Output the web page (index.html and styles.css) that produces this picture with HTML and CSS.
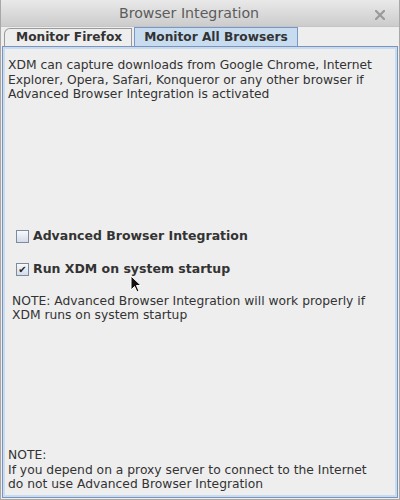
FILE: index.html
```html
<!DOCTYPE html>
<html lang="en">
<head>
  <meta charset="UTF-8" />
  <title>Browser Integration</title>
  <link rel="stylesheet" href="styles.css">
</head>
<body>

  <div class="window">
    <!-- Title bar -->
    <div class="titlebar">
      <span class="title">Browser Integration</span>
      <span class="close">
        <svg width="10" height="10" viewBox="0 0 10 10">
          <path d="M1 1 L9 9 M9 1 L1 9" stroke="#9a9a9a" stroke-width="2.2" stroke-linecap="square"/>
        </svg>
      </span>
    </div>

    <!-- Tabs -->
    <div class="tabs">
      <div class="tab">Monitor Firefox</div>
      <div class="tab selected">Monitor All Browsers</div>
    </div>

    <!-- Tab content -->
    <div class="panel">
      <p class="intro">XDM can capture downloads from Google Chrome, Internet Explorer, Opera, Safari, Konqueror or any other browser if Advanced Browser Integration is activated</p>

      <div class="options">
        <label class="check"><span class="box"></span>Advanced Browser Integration</label>
        <label class="check"><span class="box checked">&#10004;</span>Run XDM on system startup</label>
      </div>

      <p class="note">NOTE: Advanced Browser Integration will work properly if XDM runs on system startup</p>

      <p class="footnote">NOTE:<br>If you depend on a proxy server to connect to the Internet do not use Advanced Browser Integration</p>

      <!-- mouse pointer -->
      <svg class="cursor" width="14" height="20" viewBox="0 0 14 20">
        <path d="M1 1 L1 15 L4.5 11.5 L7 17 L9 16 L6.5 10.5 L11 10.5 Z" fill="#111" stroke="#fff" stroke-width="1"/>
      </svg>
    </div>
  </div>

</body>
</html>
```

FILE: styles.css
```css
/* Base */
* { margin:0; padding:0; box-sizing:border-box; }
html, body { width:400px; height:500px; }
body {
  font-family:'DejaVu Sans',sans-serif;
  background:#eeeeee;
  color:#333;
}

/* Window */
.window {
  width:400px; height:500px;
  display:flex; flex-direction:column;
  border:1px solid #a8a8a8; border-top:none;
  background:#eeeeee;
}

/* Title bar */
.titlebar {
  height:27px;
  background:linear-gradient(#e9e9e9,#cccccc);
  display:flex; align-items:center; justify-content:center;
  position:relative;
  padding-right:22px;
  border-bottom:1px solid #c4c4c4;
}
.title {
  font-size:14.2px; color:#5c5c5c;
}
.close {
  position:absolute; right:14px; top:10px;
  display:flex;
}

/* Tabs */
.tabs {
  display:flex; align-items:flex-end;
  height:19px;
  padding-left:3px;
  gap:2px;
}
.tab {
  height:18px;
  padding:0 9px 0 11px;
  font-size:12.2px; font-weight:bold; color:#333;
  line-height:17px;
  border:1px solid #9a9a9a; border-bottom:none;
  border-radius:6px 0 0 0;
  background:#eeeeee;
}
.tab.selected {
  height:19px;
  padding:0 9px 0 9px;
  background:#c8dcf0;
  border-color:#7c96c8;
  border-radius:0;
  line-height:18px;
}

/* Panel */
.panel {
  flex:1;
  margin:0 1px 1px 1px;
  border:1px solid #7d92bd;
  box-shadow:inset 0 0 0 2px #c8dcf0;
  padding:11px 8px 5px 5px;
  display:flex; flex-direction:column;
  position:relative;
  font-size:12.3px; line-height:14.6px;
}
.intro { padding-right:8px; }

.options {
  margin-top:128px;
  display:flex; flex-direction:column; gap:19px;
}
.check {
  display:flex; align-items:center; gap:4px;
  padding-left:8px;
  font-size:12.5px; font-weight:bold; color:#333;
  height:14px;
}
.box {
  width:13px; height:13px;
  border:1px solid #7e8aa0;
  background:linear-gradient(#f8fafc,#d4dce8);
  font-size:10px; line-height:11px; text-align:center;
  color:#222;
}

.note {
  margin-top:17px;
  padding-left:4px;
}
.footnote {
  margin-top:auto;
  padding-right:8px;
}

/* Pointer */
.cursor {
  position:absolute; left:127px; top:228px;
}
```
